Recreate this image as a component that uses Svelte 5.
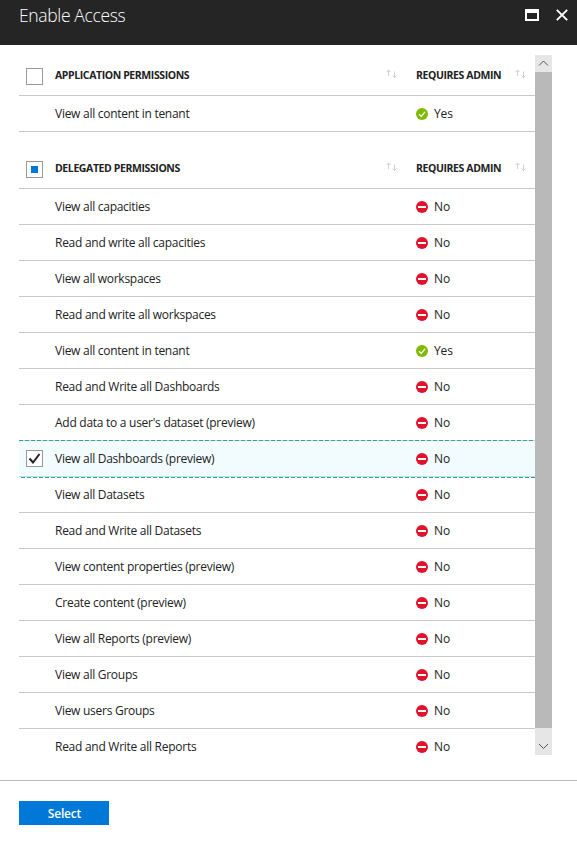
<script>
  const groups = [
    {
      title: 'APPLICATION PERMISSIONS',
      state: 'empty',
      rows: [{ name: 'View all content in tenant', admin: true }]
    },
    {
      title: 'DELEGATED PERMISSIONS',
      state: 'partial',
      rows: [
        { name: 'View all capacities' },
        { name: 'Read and write all capacities' },
        { name: 'View all workspaces' },
        { name: 'Read and write all workspaces' },
        { name: 'View all content in tenant', admin: true },
        { name: 'Read and Write all Dashboards' },
        { name: "Add data to a user's dataset (preview)" },
        { name: 'View all Dashboards (preview)', selected: true },
        { name: 'View all Datasets' },
        { name: 'Read and Write all Datasets' },
        { name: 'View content properties (preview)' },
        { name: 'Create content (preview)' },
        { name: 'View all Reports (preview)' },
        { name: 'View all Groups' },
        { name: 'View users Groups' },
        { name: 'Read and Write all Reports' }
      ]
    }
  ];
</script>

{#snippet sort()}
  <svg class="sort" width="12" height="10" viewBox="0 0 12 10" fill="none" stroke="#cfcfcf">
    <path d="M2.500 7V1M.5 3l2-2 2 2M8.500 2.500v6M6.500 6.500l2 2 2-2" />
  </svg>
{/snippet}

<div class="blade">
  <header>
    <h1>Enable Access</h1>
    <svg class="max" width="14" height="12" viewBox="0 0 14 12"><path fill="#fff" fill-rule="evenodd" d="M0 0h14v12H0zM2 4v6h10V4z" /></svg>
    <svg class="close" width="12" height="12" viewBox="0 0 12 12"><path d="M.8.8l10.400 10.400M11.200.8L.8 11.200" stroke="#fff" stroke-width="1.900" /></svg>
  </header>

  <main>
    <div class="list">
      {#each groups as g}
        <section>
          <div class="head">
            <span class="cell-check"><span class="box">{#if g.state === 'partial'}<i></i>{/if}</span></span>
            <span class="name">{g.title}</span>
            {@render sort()}
            <span class="req">REQUIRES ADMIN</span>
            {@render sort()}
          </div>
          {#each g.rows as r}
            <div class="row" class:selected={r.selected}>
              <span class="cell-check">
                {#if r.selected}
                  <span class="box"><svg width="13" height="11" viewBox="0 0 13 11" fill="none"><path d="M1.500 5.500l3.500 4L11.500 1" stroke="#222" stroke-width="2" /></svg></span>
                {/if}
              </span>
              <span class="name">{r.name}</span>
              <svg class="status" width="12" height="12" viewBox="0 0 12 12" fill="none">
                {#if r.admin}
                  <circle cx="6" cy="6" r="6" fill="#7fba00" />
                  <path d="M3 6.200l2.200 2.200L9.100 3.800" stroke="#fff" stroke-width="1.300" />
                {:else}
                  <circle cx="6" cy="6" r="6" fill="#e3122b" />
                  <path d="M2 6h8" stroke="#fff" stroke-width="2" />
                {/if}
              </svg>
              <span class="value">{r.admin ? 'Yes' : 'No'}</span>
            </div>
          {/each}
        </section>
      {/each}
    </div>
    <div class="scrollbar">
      <div class="arrow up"><svg width="11" height="7" viewBox="0 0 11 7" fill="none" stroke="#555"><path d="M1 5.500L5.500 1 10 5.500" /></svg></div>
      <div class="thumb"></div>
      <div class="arrow down"><svg width="11" height="7" viewBox="0 0 11 7" fill="none" stroke="#555"><path d="M1 1l4.500 4.500L10 1" /></svg></div>
    </div>
  </main>

  <footer><button>Select</button></footer>
</div>

<style>
  :global(body) { margin: 0; background: #fff; }
  .blade {
    width: 577px;
    height: 850px;
    display: flex;
    flex-direction: column;
    overflow: hidden;
    font: 12px/16px "Open Sans", "Noto Sans", sans-serif;
    color: #222;
    white-space: nowrap;
  }
  svg { display: block; flex: none; }
  header {
    height: 45px;
    flex: none;
    box-sizing: border-box;
    display: flex;
    align-items: flex-start;
    background: #252525;
    padding: 0 9px 0 19px;
  }
  h1 {
    margin: 3px auto 0 0;
    font-size: 17.500px;
    line-height: 24px;
    font-weight: 300;
    letter-spacing: -0.35px;
    color: #fff;
  }
  .max { margin: 9px 17px 0 0; }
  .close { margin-top: 9px; }
  main { display: flex; height: 700px; padding: 10px 0 25px 19px; flex: none; }
  .list { width: 516px; overflow: hidden; }
  section + section { margin-top: 16px; }
  .head, .row {
    display: flex;
    align-items: center;
    box-sizing: border-box;
    border-bottom: 1px solid #c8c8c8;
  }
  .head { height: 41px; font-size: 10.500px; font-weight: 700; letter-spacing: -0.4px; }
  .row { height: 36px; letter-spacing: -0.27px; }
  .cell-check { width: 36px; flex: none; display: flex; padding-left: 7px; box-sizing: border-box; }
  .head .cell-check { padding-top: 2px; }
  .box {
    width: 17px;
    height: 17px;
    box-sizing: border-box;
    border: 1px solid #999;
    background: #fff;
    display: flex;
    align-items: center;
    justify-content: center;
  }
  .box i { width: 7px; height: 7px; background: #0078d7; }
  .row .name { width: 361px; }
  .row .name, .value { padding-top: 1px; }
  .head .name { width: 331px; }
  .head .sort { margin-bottom: 2px; }
  .req { margin-left: 18px; width: 99px; }
  .value { margin-left: 6px; letter-spacing: -0.1px; }
  .selected {
    position: relative;
    background: #f2fbfe;
    border-bottom-color: #b5e5ec;
  }
  .selected::before, .selected::after {
    content: "";
    position: absolute;
    left: 0;
    right: 0;
    height: 1px;
    background: repeating-linear-gradient(90deg, #3a9c9c 0 4px, #b5e5ec 4px 6px);
  }
  .selected::before { top: -1px; }
  .selected::after { bottom: -2px; background: repeating-linear-gradient(90deg, #fff 0 2px, #3a9c9c 2px 6px); }
  .scrollbar { width: 17px; display: flex; flex-direction: column; background: #e6e6e6; }
  .arrow { display: flex; align-items: center; justify-content: center; }
  .up { height: 17px; }
  .down { height: 27px; padding-top: 10px; box-sizing: border-box; }
  .thumb { flex: 1; background: #b9b9b9; }
  footer { border-top: 1px solid #b9b9b9; padding: 20px 19px; }
  button {
    display: block;
    width: 90px;
    height: 24px;
    border: 0;
    padding: 1px 0 0 1px;
    background: #0078d7;
    color: #fff;
    font: 600 12px/24px "Open Sans", "Noto Sans", sans-serif;
    letter-spacing: -0.2px;
  }
</style>
